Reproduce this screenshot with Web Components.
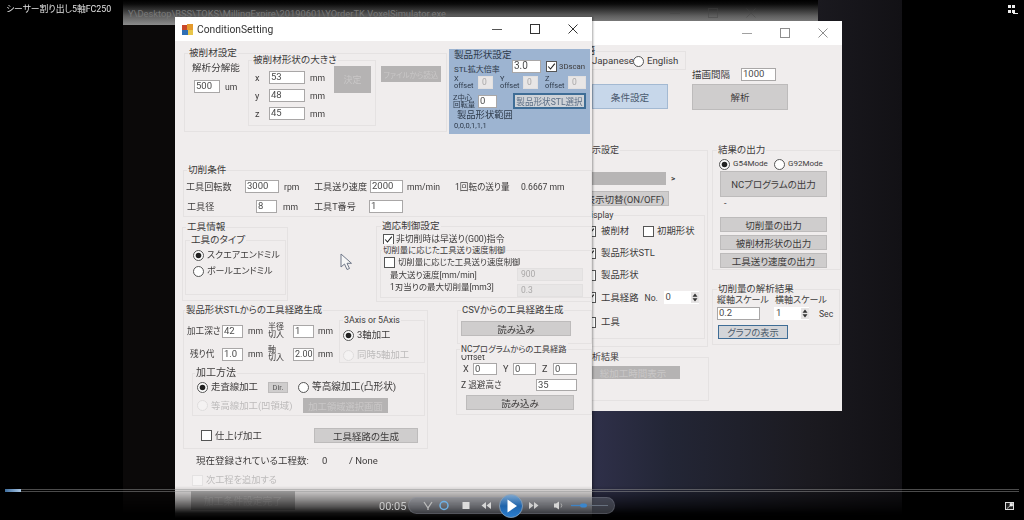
<!DOCTYPE html>
<html lang="ja"><head><meta charset="utf-8"><title>ConditionSetting</title>
<style>html,body{margin:0;background:#000}body{width:1024px;height:520px;overflow:hidden}</style></head>
<body><player-stage></player-stage>
<script>
const FONT='Roboto,"Noto Sans CJK JP",sans-serif';
function def(name,css,html){customElements.define(name,class extends HTMLElement{
  constructor(){super();this.attachShadow({mode:'open'});}
  connectedCallback(){if(this._d)return;this._d=1;this.shadowRoot.innerHTML='<style>'+css+'</style>'+html(this);}
});}
const BOX=`:host{display:inline-block;box-sizing:border-box;flex:none}`;
const LAY=`:host{display:block}
.r{display:flex;align-items:center;flex:none}.c{display:flex;flex-direction:column;flex:none}
.t{display:block;flex:none;white-space:nowrap;font-size:9.1px;line-height:12px;color:#3d3b3b}
.s{font-size:8.6px}.l2{line-height:7px;font-size:7.4px}.g{color:#b9b7b7}`;

def('ui-input',BOX+`:host{height:13px;background:#fff;border:1px solid #a9a7a7;font-size:9.5px;line-height:10.5px;padding-left:1px;color:#4b4b4b;white-space:nowrap;overflow:hidden}
:host([disabled]){background:#e8e6e6;border-color:#e2e0e0;color:#aaa8a8;padding-left:3px;font-size:8.5px}`,e=>`<slot></slot>`);

def('spin-box',BOX+`:host{height:13px;background:#fff;display:inline-flex;justify-content:space-between;font-size:9.5px;line-height:12px;padding-left:2px;color:#4b4b4b}
svg{display:block;margin-top:1px}`,e=>`<slot></slot><svg width="8" height="11" viewBox="0 0 8 11"><rect width="8" height="11" fill="#e6e4e4"/><path d="M4 1.500L6.500 4.700H1.500ZM4 9.500L1.500 6.300H6.500Z" fill="#333"/></svg>`);

def('ui-btn',BOX+`:host{display:inline-flex;align-items:center;justify-content:center;background:#cfcdcd;border:1px solid #bdbbbb;color:#3d3b3b;font-size:9.500px;white-space:nowrap;overflow:hidden}
:host([kind=off]){background:#b5b3b3;border-color:#b5b3b3;color:#c9c7c7;font-size:9px}
:host([kind=focus]){background:#cfd3d8;border:2px solid #3f6d96;color:#5d6f86;font-size:8.600px}
:host([kind=blue]){background:#c7d7ea;border:1px solid #a3b9d2;color:#4a5a6e;font-size:9.600px}`,e=>`<slot></slot>`);

def('ui-radio',`:host{display:inline-flex;align-items:center;flex:none;gap:var(--gap,3px);font-size:var(--fs,9.4px);line-height:12px;color:#3d3b3b;white-space:nowrap}
:host([disabled]){color:#bdbbbb}svg{flex:none;display:block}`,
e=>`<svg width="11" height="11" viewBox="0 0 11 11"><circle cx="5.500" cy="5.500" r="5" fill="${e.hasAttribute('disabled')?'#f4f2f2':'#fff'}" stroke="${e.hasAttribute('disabled')?'#dedcdc':'#555'}"/>${e.hasAttribute('checked')?'<circle cx="5.500" cy="5.500" r="2.800" fill="#222"/>':''}</svg><slot></slot>`);

def('ui-check',`:host{display:inline-flex;align-items:center;flex:none;gap:var(--gap,3px);font-size:var(--fs,9.4px);line-height:12px;color:#3d3b3b;white-space:nowrap}
:host([disabled]){color:#bdbbbb}svg{flex:none;display:block}`,
e=>`<svg width="11" height="11" viewBox="0 0 11 11"><rect x=".5" y=".5" width="10" height="10" fill="${e.hasAttribute('disabled')?'#f6f4f4':'#fff'}" stroke="${e.hasAttribute('disabled')?'#e4e2e2':'#555'}"/>${e.hasAttribute('checked')?'<path d="M2.200 5.500L4.500 8L8.800 2.600" fill="none" stroke="#222" stroke-width="1.100"/>':''}</svg><slot></slot>`);

def('group-box',`:host{display:block;box-sizing:border-box;flex:none;position:relative;border:1px solid #e5e2e2}
.lab{position:absolute;left:var(--lx,3px);top:-7px;background:#f0eded;padding:0 1px;font-size:var(--lf,9.600px);line-height:12px;color:#3d3b3b;white-space:nowrap}`,
e=>`<span class="lab">${e.getAttribute('label')||''}</span><slot></slot>`);

def('win-frame',`:host{position:absolute;display:flex;flex-direction:column;background:#f0eded;font-family:${FONT};font-feature-settings:"palt"}
.bar{flex:none;height:24px;background:#fff;display:flex;align-items:center}
.ic{margin-left:7px;flex:none;display:block}
.ti{margin-left:4px;font-size:10.300px;color:#333;white-space:nowrap}
.sp{flex:1}.b{width:38px;flex:none;display:block}
.body{flex:1;min-height:0;overflow:hidden}:host([dim]) .b{opacity:.55}`,
e=>`<div class="bar">${e.getAttribute('caption')?`<svg class="ic" width="11" height="11" viewBox="0 0 11 11"><rect width="6" height="6" x="0" y="5" fill="#2f6fb5"/><rect width="6" height="6" x="5" y="0" fill="#e59a2c"/><rect width="5" height="5" x="0" y="1" fill="#c9482b"/><rect width="5" height="5" x="6" y="6" fill="#e8c64a"/></svg><span class="ti">${e.getAttribute('caption')}</span>`:''}<span class="sp"></span>
<svg class="b" height="12" viewBox="0 0 38 12"><path d="M14 6.500H24" stroke="#555"/></svg>
<svg class="b" height="12" viewBox="0 0 38 12"><rect x="14.500" y="1.500" width="9" height="9" fill="none" stroke="#333"/></svg>
<svg class="b" height="12" viewBox="0 0 38 12"><path d="M14.500 1.500L23.500 10.500M23.500 1.500L14.500 10.500" stroke="#333"/></svg></div><div class="body"><slot></slot></div>`);

def('main-form',LAY+`:host{padding-left:7px;height:100%;box-sizing:border-box}
.blue{flex:none;box-sizing:border-box;width:141px;height:85px;background:#9db4d1;padding:0 0 0 5px}
.blue .t{color:#2e3a4a}`,e=>`
<div class="r" style="align-items:flex-start;padding-top:8px">
 <group-box label="被削材設定" style="width:263px;height:79px;margin:4px 0 0 2px">
  <div class="r" style="align-items:flex-start">
   <div class="c" style="width:63px;padding:8px 0 0 7px;box-sizing:border-box">
     <span class="t" style="font-size:9.600px">解析分解能</span>
     <div class="r" style="margin:6px 0 0 2px"><ui-input style="width:26px">500</ui-input><span class="t s" style="margin-left:5px">um</span></div>
   </div>
   <group-box label="被削材形状の大きさ" style="width:128px;height:66px;margin-top:6px">
    <div class="r" style="align-items:flex-start;padding-top:10px">
     <div class="c" style="gap:5px;width:85px">
      <div class="r"><span class="t" style="width:20px;padding-left:6px;box-sizing:border-box">x</span><ui-input style="width:36px">53</ui-input><span class="t s" style="margin-left:5px">mm</span></div>
      <div class="r"><span class="t" style="width:20px;padding-left:6px;box-sizing:border-box">y</span><ui-input style="width:36px">48</ui-input><span class="t s" style="margin-left:5px">mm</span></div>
      <div class="r"><span class="t" style="width:20px;padding-left:6px;box-sizing:border-box">z</span><ui-input style="width:36px">45</ui-input><span class="t s" style="margin-left:5px">mm</span></div>
     </div>
     <ui-btn kind="off" style="width:37px;height:27px;margin-top:-5px">決定</ui-btn>
    </div>
   </group-box>
   <ui-btn kind="off" style="width:60px;height:16px;margin:12px 0 0 5px;font-size:7.500px">ファイルから読込</ui-btn>
  </div>
 </group-box>
 <div class="blue" style="margin-left:2px">
  <span class="t" style="font-size:9.600px">製品形状設定</span>
  <div class="r" style="margin-top:-1px;height:13px"><span class="t s" style="width:58px;margin-top:6px;font-size:8px">STL拡大倍率</span><ui-input style="width:29px;font-size:10px">3.0</ui-input><ui-check checked style="margin-left:5px;--gap:2px;--fs:7.800px">3Dscan</ui-check></div>
  <div class="r" style="margin-top:2px"><span class="t l2" style="width:24px">X<br>offset</span><ui-input disabled style="width:15px">0</ui-input><span class="t l2" style="width:23px;margin-left:7px">Y<br>offset</span><ui-input disabled style="width:15px">0</ui-input><span class="t l2" style="width:23px;margin-left:7px">Z<br>offset</span><ui-input disabled style="width:18px">0</ui-input></div>
  <div class="r" style="margin-top:4px;height:16px"><span class="t l2" style="width:25px;margin-left:-1px">Z中心<br>回転量</span><ui-input style="width:19px">0</ui-input><ui-btn kind="focus" style="width:73px;height:16px;margin-left:16px">製品形状STL選択</ui-btn></div>
  <span class="t" style="margin:0 0 0 3px;font-size:9.300px">製品形状範囲</span>
  <span class="t" style="font-size:7.500px;margin-top:-1px">0,0,0,1,1,1</span>
 </div>
</div>
<group-box label="切削条件" style="width:409px;height:47px;margin:36px 0 0 1px;--lx:3px">
 <div class="r" style="padding:9px 0 0 2px"><span class="t" style="width:59px">工具回転数</span><ui-input style="width:34px">3000</ui-input><span class="t s" style="margin-left:5px;width:30px">rpm</span><span class="t" style="width:56px">工具送り速度</span><ui-input style="width:33px">2000</ui-input><span class="t s" style="margin-left:4px;width:48px">mm/min</span><span class="t s" style="width:66px">1回転の送り量</span><span class="t s">0.6667 mm</span></div>
 <div class="r" style="padding:7px 0 0 3px"><span class="t" style="width:69px">工具径</span><ui-input style="width:21px">8</ui-input><span class="t s" style="margin-left:6px;width:31px">mm</span><span class="t" style="width:55px">工具T番号</span><ui-input style="width:34px">1</ui-input></div>
</group-box>
<div class="r" style="align-items:flex-start;margin-top:10px">
 <group-box label="工具情報" style="width:106px;height:74px;--lx:3px">
  <group-box label="工具のタイプ" style="width:101px;height:55px;margin:12px 0 0 2px;--lx:4px">
   <div class="c" style="gap:4px;padding:8px 0 0 7px"><ui-radio checked style="--fs:9px">スクエアエンドミル</ui-radio><ui-radio style="--fs:9px">ボールエンドミル</ui-radio></div>
  </group-box>
 </group-box>
 <group-box label="適応制御設定" style="width:216px;height:76px;margin:-1px 0 0 88px;--lx:4px">
  <div class="r" style="padding:6px 0 0 6px"><ui-check checked style="--gap:2px;--fs:8.800px">非切削時は早送り(G00)指令</ui-check></div>
  <group-box label="切削量に応じた工具送り速度制御" style="width:212px;height:48px;margin:5px 0 0 3px;--lx:1px;--lf:8.400px">
   <div class="r" style="padding:5px 0 0 3px"><ui-check style="--fs:8.400px">切削量に応じた工具送り速度制御</ui-check></div>
   <div class="r" style="justify-content:space-between;padding-left:9px"><span class="t" style="font-size:8.500px">最大送り速度[mm/min]</span><ui-input disabled style="width:66px;margin-right:8px">900</ui-input></div>
   <div class="r" style="justify-content:space-between;padding-left:9px;margin-top:3px;align-items:flex-start"><span class="t" style="font-size:8.500px;margin-top:-3px">1刃当りの最大切削量[mm3]</span><ui-input disabled style="width:66px;margin-right:8px">0.3</ui-input></div>
  </group-box>
 </group-box>
</div>
<div class="r" style="align-items:flex-start;margin-top:8px">
 <div class="c">
 <group-box label="製品形状STLからの工具経路生成" style="width:245px;height:139px;margin-left:1px;--lx:1px;--lf:9.400px">
  <div class="r" style="align-items:flex-start;padding-top:9px">
   <div class="c" style="width:155px;padding-top:3px;gap:7px">
    <div class="r" style="padding-left:3px"><span class="t s" style="width:35px">加工深さ</span><ui-input style="width:21px">42</ui-input><span class="t s" style="width:25px;padding-left:5px;box-sizing:border-box">mm</span><span class="t l2" style="width:25px;font-size:8px;line-height:8px">半径<br>切入</span><ui-input style="width:21px">1</ui-input><span class="t s" style="margin-left:4px">mm</span></div>
    <div class="r" style="padding-left:6px"><span class="t s" style="width:32px">残り代</span><ui-input style="width:21px">1.0</ui-input><span class="t s" style="width:25px;padding-left:5px;box-sizing:border-box">mm</span><span class="t l2" style="width:25px;font-size:8px;line-height:8px">軸<br>切入</span><ui-input style="width:21px;font-size:9px">2.00</ui-input><span class="t s" style="margin-left:4px">mm</span></div>
   </div>
   <group-box label="3Axis or 5Axis" style="width:86px;height:43px;--lx:3px;--lf:8.800px">
    <div class="c" style="gap:8px;padding:8px 0 0 3px"><ui-radio checked>3軸加工</ui-radio><ui-radio disabled>同時5軸加工</ui-radio></div>
   </group-box>
  </div>
  <group-box label="加工方法" style="width:233px;height:43px;margin:10px 0 0 8px;--lx:2px;--lf:10px">
   <div class="r" style="padding:7px 0 0 4px"><ui-radio checked style="width:71px">走査線加工</ui-radio><ui-btn style="width:20px;height:11px;font-size:7.500px;color:#555">Dir.</ui-btn><ui-radio style="margin-left:10px;--fs:9.700px">等高線加工(凸形状)</ui-radio></div>
   <div class="r" style="padding:5px 0 0 4px"><ui-radio disabled style="width:106px;--fs:9.400px">等高線加工(凹領域)</ui-radio><ui-btn kind="off" style="width:85px;height:15px;font-size:9.300px">加工領域選択画面</ui-btn></div>
  </group-box>
  <div class="r" style="margin-top:12px;padding-left:17px"><ui-check style="width:113px">仕上げ加工</ui-check><ui-btn style="width:104px;height:15px">工具経路の生成</ui-btn></div>
 </group-box>
 <div class="r" style="padding:6px 0 0 14px"><span class="t" style="width:126px;font-size:9.500px">現在登録されている工程数:</span><span class="t s" style="width:27px;font-size:9.500px">0</span><span class="t s" style="font-size:9.500px">/ None</span></div>
 <div class="r" style="padding:7px 0 0 10px"><ui-check disabled style="--gap:3px;--fs:9.200px">次工程を追加する</ui-check></div>
 <ui-btn kind="off" style="width:104px;height:19px;margin:5px 0 0 9px;font-size:9.800px">加工条件設定完了</ui-btn>
 </div>
 <div class="c" style="margin-left:29px">
  <group-box label="CSVからの工具経路生成" style="width:135px;height:34px;--lx:3px;--lf:9.500px">
   <ui-btn style="display:flex;width:110px;height:15px;margin:10px 0 0 3px">読み込み</ui-btn>
  </group-box>
  <group-box label="NCプログラムからの工具経路" style="width:136px;height:66px;margin:5px 0 0 -1px;--lx:3px;--lf:8.300px">
   <span class="t s" style="margin:3px 0 0 4px;line-height:9px">Offset</span>
   <div class="r" style="padding-left:6px;margin-top:1px"><span class="t" style="width:10px">X</span><ui-input style="width:24px;height:12px">0</ui-input><span class="t" style="margin-left:6px;width:10px">Y</span><ui-input style="width:23px;height:12px">0</ui-input><span class="t" style="margin-left:6px;width:11px">Z</span><ui-input style="width:24px;height:12px">0</ui-input></div>
   <div class="r" style="padding-left:4px;margin-top:4px"><span class="t s" style="width:75px">Z 退避高さ</span><ui-input style="width:41px;height:12px">35</ui-input></div>
   <ui-btn style="display:flex;width:108px;height:15px;margin:4px 0 0 9px">読み込み</ui-btn>
  </group-box>
 </div>
</div>`);

def('sim-form',LAY+`:host{height:100%;box-sizing:border-box}`,e=>`
<div class="r" style="align-items:flex-start;padding-top:6px">
 <div class="c" style="width:152px">
  <group-box label="言語" style="width:146px;height:19px;--lx:34px">
   <div class="r" style="padding:3px 0 0 39px"><ui-radio checked style="--fs:9.700px;--gap:1px;width:53px">Japanese</ui-radio><ui-radio style="--fs:9.700px">English</ui-radio></div>
  </group-box>
  <ui-btn kind="blue" style="display:flex;width:76px;height:25px;margin:14px 0 0 52px">条件設定</ui-btn>
 </div>
 <div class="c">
  <div class="r" style="margin-top:17px"><span class="t" style="width:49px;font-size:9.500px">描画間隔</span><ui-input style="width:35px;height:13px">1000</ui-input></div>
  <ui-btn style="display:flex;width:96px;height:26px;margin-top:3px">解析</ui-btn>
 </div>
</div>
<div class="r" style="align-items:flex-start;margin-top:40px">
 <div class="c" style="width:172px">
  <group-box label="表示設定" style="width:168px;height:197px;--lx:41px;--lf:9px">
   <div class="r" style="padding:21px 0 0 40px"><div style="width:85px;height:13px;background:#b7b5b5"></div><span class="t" style="margin-left:5px;font-weight:700;font-size:8px">&gt;</span></div>
   <ui-btn style="display:flex;width:88px;height:15px;margin:6px 0 0 40px">表示切替(ON/OFF)</ui-btn>
   <group-box label="Display" style="width:163px;height:124px;margin:9px 0 0 1px;--lx:41px;--lf:8.800px">
    <div class="c" style="padding:9px 0 0 42px">
     <div class="r" style="height:12px"><ui-check checked style="--gap:5px;width:58px">被削材</ui-check><ui-check style="margin-left:0">初期形状</ui-check></div>
     <div class="r" style="height:12px;margin-top:10px"><ui-check checked style="--gap:5px">製品形状STL</ui-check></div>
     <div class="r" style="height:12px;margin-top:10px"><ui-check style="--gap:5px">製品形状</ui-check></div>
     <div class="r" style="height:13px;margin-top:10px"><ui-check checked style="--gap:5px">工具経路</ui-check><span class="t s" style="margin-left:6px;width:19px">No.</span><spin-box style="width:35px">0</spin-box></div>
     <div class="r" style="height:12px;margin-top:12px"><ui-check style="--gap:5px">工具</ui-check></div>
    </div>
   </group-box>
  </group-box>
  <group-box label="解析結果" style="width:169px;height:44px;margin-top:10px;--lx:41px;--lf:9px">
   <ui-btn kind="off" style="display:flex;width:94px;height:13px;margin:8px 0 0 45px;font-size:9.500px">総加工時間表示</ui-btn>
   <span class="t s" style="margin:3px 0 0 45px">0</span>
  </group-box>
 </div>
 <div class="c">
  <group-box label="結果の出力" style="width:129px;height:120px;--lx:4px;--lf:9.500px">
   <div class="r" style="padding:7px 0 0 6px"><ui-radio checked style="--fs:8px;width:55px">G54Mode</ui-radio><ui-radio style="--fs:8px">G92Mode</ui-radio></div>
   <ui-btn style="display:flex;width:107px;height:26px;margin:1px 0 0 7px">NCプログラムの出力</ui-btn>
   <span class="t" style="margin:0 0 0 11px">-</span>
   <ui-btn style="display:flex;width:107px;height:15px;margin:8px 0 0 7px">切削量の出力</ui-btn>
   <ui-btn style="display:flex;width:107px;height:15px;margin:3px 0 0 7px">被削材形状の出力</ui-btn>
   <ui-btn style="display:flex;width:107px;height:15px;margin:3px 0 0 7px">工具送り速度の出力</ui-btn>
  </group-box>
  <group-box label="切削量の解析結果" style="width:128px;height:56px;margin-top:19px;--lx:4px;--lf:9.500px">
   <div class="r" style="padding:4px 0 0 4px"><span class="t" style="width:58px;font-size:9px">縦軸スケール</span><span class="t" style="font-size:9px">横軸スケール</span></div>
   <div class="r" style="padding:1px 0 0 4px"><ui-input style="width:43px">0.2</ui-input><spin-box style="width:35px;margin-left:14px">1</spin-box><span class="t s" style="margin-left:10px">Sec</span></div>
   <ui-btn kind="focus" style="display:flex;width:70px;height:14px;margin:5px 0 0 5px;background:#d3d5d9;color:#4c5a6a;border-width:1.500px;font-size:9.200px">グラフの表示</ui-btn>
  </group-box>
 </div>
</div>`);

def('media-bar',`:host{position:absolute;left:0;right:0;top:486px;height:34px;display:block;font-family:${FONT};
background:linear-gradient(rgba(0,0,0,0),rgba(0,0,0,.12) 4px,rgba(0,0,0,.42) 14px,rgba(0,0,0,.66) 21px,rgba(0,0,0,.93) 27px,#000 32px)}
.line{position:absolute;left:5px;right:5px;top:3px;height:3px;box-sizing:border-box;border-top:1px solid rgba(150,150,150,.5);border-bottom:1px solid rgba(150,150,150,.5)}
.prog{position:absolute;left:5px;width:16px;top:3px;height:3px;background:linear-gradient(90deg,#3f6f9f,#a9c6e4)}
.time{position:absolute;left:379px;top:14px;font-size:11px;line-height:14px;color:#c9c9c9;white-space:nowrap}
.pill{position:absolute;left:408px;top:11px;width:207px;height:17px;border-radius:9px;background:rgba(120,125,135,.42);border:1px solid rgba(170,175,185,.22);box-sizing:border-box;display:flex;align-items:center}
.pill svg{flex:none;display:block}
.play{position:absolute;left:499px;top:8px;display:block}
.full{position:absolute;left:1005px;top:16px;display:block}`,e=>`
<div class="line"></div><div class="prog"></div><span class="time">00:05</span>
<div class="pill"><svg width="207" height="15" viewBox="0 0 207 15">
<path d="M15 4L19 10M23 4L19 10V12" stroke="#bbb" fill="none" stroke-width="1.300"/>
<circle cx="35" cy="7.500" r="4" fill="none" stroke="#6fb2e6" stroke-width="1.500"/>
<rect x="53.500" y="4" width="7" height="7" fill="#dcdcdc"/>
<path d="M82 4V11L77.500 7.500ZM77 4V11L72.500 7.500Z" fill="#d5d5d5"/>
<path d="M120 4V11L124.500 7.500ZM125 4V11L129.500 7.500Z" fill="#cfcfcf"/>
<path d="M145 5.500H147L150 3.500V11.500L147 9.500H145Z" fill="#d5d5d5"/><path d="M152 5.500Q153.500 7.500 152 9.500" stroke="#aaa" fill="none"/>
<path d="M162 7.500H199" stroke="#67707e"/><path d="M162 7.500H172" stroke="#3f83c4" stroke-width="1.300"/>
<rect x="171" y="5.500" width="7" height="4" rx="2" fill="#3a86cd"/>
</svg></div>
<svg class="play" width="24" height="24" viewBox="0 0 24 24"><defs><linearGradient id="p" x1="0" y1="0" x2="0" y2="1"><stop offset="0" stop-color="#7fa8d0"/><stop offset=".5" stop-color="#1f64ab"/><stop offset="1" stop-color="#2b7fd0"/></linearGradient></defs><circle cx="12" cy="12" r="11.500" fill="url(#p)" stroke="#8fa3b8" stroke-width=".8"/><path d="M8.500 5.500L18 12L8.500 18.500Z" fill="#fff"/></svg>
<svg class="full" width="9" height="8" viewBox="0 0 9 8"><rect x=".5" y=".5" width="8" height="7" fill="#222" stroke="#ddd"/><path d="M5 1.500H7.500V4H5ZM2 6.500L5 4" stroke="#eee" fill="#eee" stroke-width=".7"/></svg>`);

def('player-stage',`:host{display:block;position:relative;width:1024px;height:520px;overflow:hidden;background:#000;font-family:${FONT};font-feature-settings:"palt"}
.desk{position:absolute;left:123px;top:0;width:779px;height:520px;background:linear-gradient(90deg,#0b0909 0,#0b0909 52%,#2e2f48 61%,#232636 70%,#1b1a20 88%,#121115 100%)}
.blur{position:absolute;inset:0;filter:blur(.4px)}
.top{position:absolute;left:123px;top:0;width:695px;height:25px;background:linear-gradient(#000 0,#0b0b0b 4px,#5f5f5f 16px,#8c8c8c 25px);display:flex;overflow:hidden}
.top span{margin:8px 0 0 5px;font-size:9.300px;line-height:12px;color:#777;white-space:nowrap;flex:none;width:528px;overflow:hidden}
.top svg{flex:none;display:block;margin-top:7px;opacity:.45}
.name{position:absolute;left:6px;top:2px;font-size:8.800px;line-height:14px;color:#e2e2e2;white-space:nowrap}
.grid{position:absolute;left:1008px;top:5px;display:block}
.cur{position:absolute;left:340px;top:253px;display:block}`,e=>`
<div class="desk"></div>
<div class="blur">
<div class="top"><span>Y\\Desktop\\BSS\\TOKS\\MillingExpire\\20190601\\YOrderTK.VoxelSimulator.exe</span>
<svg width="38" height="12" viewBox="0 0 38 12"><path d="M14 6.500H24" stroke="#444"/></svg><svg width="38" height="12" viewBox="0 0 38 12"><rect x="14.500" y="1.500" width="9" height="9" fill="none" stroke="#444"/></svg><svg width="38" height="12" viewBox="0 0 38 12"><path d="M14.500 1.500L23.500 10.500M23.500 1.500L14.500 10.500" stroke="#444"/></svg></div>
<span class="name">シーサー割り出し5軸FC250</span>
<svg class="grid" width="10" height="10" viewBox="0 0 10 10"><path d="M0 0h3v3H0zM4 0h3v3H4zM0 5h3v3H0zM4 5h3v3H4zM5 8h5v1H5z" fill="#eee"/></svg>
<win-frame dim style="left:540px;top:21px;width:302px;height:390px"><sim-form></sim-form></win-frame>
<win-frame caption="ConditionSetting" style="left:175px;top:17px;width:417px;height:503px;box-shadow:1px 0 2px rgba(0,0,0,.35)"><main-form></main-form></win-frame>
<svg class="cur" width="13" height="18" viewBox="0 0 13 18"><path d="M1 1V14L4.500 11L7 16.500L9.500 15.500L7 10.300H11.500Z" fill="#f6f6f6" stroke="#6f7788"/></svg>
</div>
<media-bar></media-bar>`);
</script></body></html>
